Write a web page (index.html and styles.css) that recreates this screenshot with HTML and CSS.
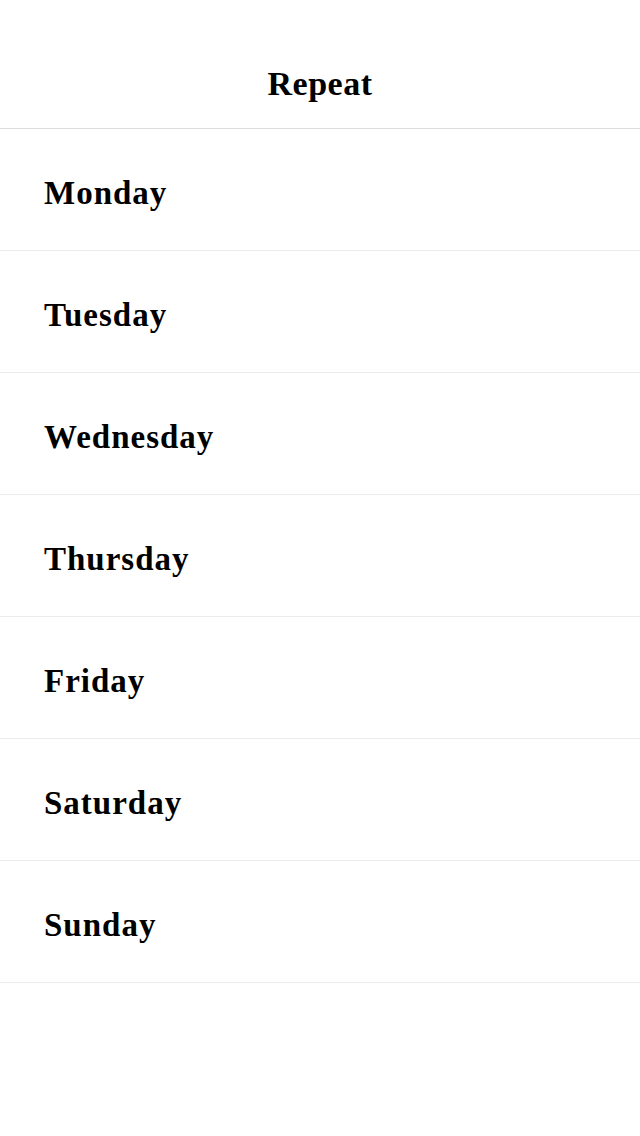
FILE: index.html
```html
<!DOCTYPE html>
<html>
<head>
<meta charset="utf-8">
<link rel="stylesheet" href="styles.css">
</head>
<body>
<header class="bar"><h1 class="title">Repeat</h1></header>
<ul class="days">
<li class="day">Monday</li>
<li class="day">Tuesday</li>
<li class="day">Wednesday</li>
<li class="day">Thursday</li>
<li class="day">Friday</li>
<li class="day">Saturday</li>
<li class="day">Sunday</li>
</ul>
</body>
</html>
```
FILE: styles.css
```css
html, body {
  margin: 0;
  padding: 0;
  background: #fff;
}
body {
  font-family: "Liberation Serif", "Times New Roman", serif;
  color: #000;
}
.bar {
  height: 101px;
  padding-bottom: 27px;
  border-bottom: 1px solid #dcdcdc;
  display: flex;
  align-items: flex-end;
  justify-content: center;
}
.title {
  margin: 0;
  font-size: 34px;
  font-weight: bold;
  line-height: 34px;
  letter-spacing: 0.5px;
}
.days {
  list-style: none;
  margin: 0;
  padding: 0;
}
.day {
  height: 114px;
  padding: 7px 0 0 44px;
  border-bottom: 1px solid #ebebeb;
  display: flex;
  align-items: center;
  font-size: 33px;
  line-height: 33px;
  font-weight: bold;
  letter-spacing: 1px;
}
```
